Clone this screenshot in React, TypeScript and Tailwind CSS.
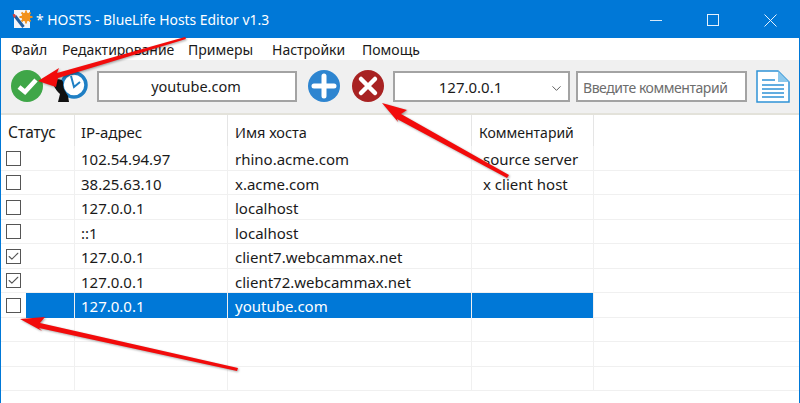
import React from 'react';
import { ChevronDown, Check } from 'lucide-react';

const menuItems = [
  { name: 'Файл', width: 'w-[51px]' },
  { name: 'Редактирование', width: 'w-[126px]' },
  { name: 'Примеры', width: 'w-[84px]' },
  { name: 'Настройки', width: 'w-[90px]' },
  { name: 'Помощь', width: 'w-[70px]' },
];

const headers = [
  { title: 'Статус', className: 'pl-[7px] text-[15.5px]' },
  { title: 'IP-адрес', className: 'pl-[6px] text-[15px]' },
  { title: 'Имя хоста', className: 'pl-[7px] text-[14.5px]' },
  { title: 'Комментарий', className: 'pl-[7px] text-[14px]' },
  { title: '', className: '' },
];

const rows = [
  { checked: false, ip: '102.54.94.97', host: 'rhino.acme.com', comment: 'source server' },
  { checked: false, ip: '38.25.63.10', host: 'x.acme.com', comment: 'x client host' },
  { checked: false, ip: '127.0.0.1', host: 'localhost', comment: '' },
  { checked: false, ip: '::1', host: 'localhost', comment: '' },
  { checked: true, ip: '127.0.0.1', host: 'client7.webcammax.net', comment: '' },
  { checked: true, ip: '127.0.0.1', host: 'client72.webcammax.net', comment: '' },
  { checked: false, ip: '127.0.0.1', host: 'youtube.com', comment: '', selected: true },
  { checked: false, ip: '', host: '', comment: '' },
  { checked: false, ip: '', host: '', comment: '' },
  { checked: false, ip: '', host: '', comment: '' },
];

function AppIcon() {
  return (
    <svg width="22" height="22" viewBox="0 0 22 22" className="shrink-0">
      <rect x="3" y="1" width="16" height="18" fill="#f4f6fa" />
      <circle cx="15" cy="8" r="4.5" fill="#f2921d" />
      <circle cx="15" cy="8" r="1.5" fill="#fbe3bd" />
      <path d="M15 1.5v13M8.5 8h13M10.5 3.5l9 9M19.5 3.5l-9 9" stroke="#f2921d" strokeWidth="1.8" />
      <path d="M4 7l8.5 11" stroke="#245f9e" strokeWidth="3" />
      <path d="M1.5 5.5L4 5l1 2.5L3 9z" fill="#d8403a" />
    </svg>
  );
}

function ClockIcon() {
  return (
    <svg width="34" height="34" viewBox="0 0 34 34">
      <circle cx="20" cy="16" r="12" fill="#fff" stroke="#1f7fc4" strokeWidth="3.5" />
      <path d="M17 7l3 11 6-5" fill="none" stroke="#1f7fc4" strokeWidth="2" />
      <path d="M0 12C4 9 10 10 9 15 9 20 12 23 14 27L15 33H4L6 25C2 21-2 16 0 12z" fill="#111" />
    </svg>
  );
}

function CircleButton({ color, children }: { color: string; children: React.ReactNode }) {
  return (
    <svg width="32" height="32" viewBox="0 0 32 32" className="shrink-0">
      <circle cx="16" cy="16" r="16" fill={color} />
      {children}
    </svg>
  );
}

function DocIcon() {
  return (
    <svg width="34" height="33" viewBox="0 0 34 33">
      <path d="M1 1h21l11 11v20H1z" fill="#fff" stroke="#2f93d6" strokeWidth="1.5" />
      <path d="M22 1l11 11H22z" fill="#8cc8ec" />
      <path d="M6 10h13M6 15h22M6 19h22M6 23h22M6 27h22" stroke="#2f93d6" strokeWidth="1.5" />
    </svg>
  );
}

function Checkbox({ checked }: { checked: boolean }) {
  return (
    <div className="flex h-[15px] w-[15px] items-center justify-center border border-[#555] bg-white">
      {checked && <Check size={13} strokeWidth={2} className="text-[#555]" />}
    </div>
  );
}

function Arrows() {
  return (
    <svg
      width="800"
      height="403"
      viewBox="0 0 800 403"
      className="pointer-events-none absolute -left-px top-0 drop-shadow-[1px_1px_1px_rgba(0,0,0,0.35)]"
    >
      <path d="M38 81L59 68 57 73 185 37 186 39 58 78 56 87z" fill="#f20b0b" />
      <path d="M382 103L407 110 401 114 509 175 507 178 397 119 398 122z" fill="#f20b0b" />
      <path d="M20 319L45 317 40 323 238 368 237 371 39 328 42 331z" fill="#f20b0b" />
    </svg>
  );
}

export default function App() {
  return (
    <div className="relative flex h-[403px] w-[800px] flex-col overflow-hidden border-x border-[#0078d7] bg-white font-['Noto_Sans',sans-serif] text-[14px] text-[#1a1a1a]">
      {/* title bar */}
      <div className="flex h-[38px] shrink-0 items-center bg-[#0078d7] pl-[10px] pt-[2px] text-white">
        <AppIcon />
        <span className="ml-[3px] text-[13.9px]">* HOSTS - BlueLife Hosts Editor v1.3</span>
        <div className="ml-auto mr-[22px] flex items-center gap-[45px]">
          <svg width="12" height="13" viewBox="0 0 12 13">
            <path d="M0 6.5h12" stroke="#d5e8f8" strokeWidth="1" />
          </svg>
          <svg width="12" height="12" viewBox="0 0 12 12">
            <rect x="0.5" y="0.5" width="11" height="11" fill="none" stroke="#e6f1fb" strokeWidth="1" />
          </svg>
          <svg width="13" height="13" viewBox="0 0 13 13">
            <path d="M0.5 0.5l12 12M12.5 0.5l-12 12" stroke="#e6f1fb" strokeWidth="1" />
          </svg>
        </div>
      </div>

      {/* menu */}
      <div className="flex h-[22px] shrink-0 items-center pl-[10px]">
        {menuItems.map((item) => (
          <span key={item.name} className={item.width}>
            {item.name}
          </span>
        ))}
      </div>

      {/* toolbar */}
      <div className="flex h-[55px] shrink-0 items-center border-b-2 border-[#e3e2da] bg-[#f0f0f0] pb-[1px] pl-[10px]">
        <CircleButton color="#3fa648">
          <path d="M8 17l6 5 11-12" fill="none" stroke="#fff" strokeWidth="4.5" />
        </CircleButton>
        <div className="ml-[11px]">
          <ClockIcon />
        </div>
        <div className="ml-[9px] flex h-[31px] w-[200px] items-center justify-center border-2 border-[#a3a3a3] bg-white pr-[2px] pt-[2px] text-[14.5px]">
          youtube.com
        </div>
        <div className="ml-[11px]">
          <CircleButton color="#2e85d0">
            <path d="M16 6v20M6 16h20" stroke="#fff" strokeWidth="5" strokeLinecap="round" />
          </CircleButton>
        </div>
        <div className="ml-[12px]">
          <CircleButton color="#a82222">
            <path d="M9 9l14 14M23 9L9 23" stroke="#fff" strokeWidth="4.5" strokeLinecap="round" />
          </CircleButton>
        </div>
        <div className="relative ml-[9px] flex h-[31px] w-[177px] items-center justify-center border-2 border-[#a3a3a3] bg-white pr-[22px] pt-[2px] text-[15px]">
          127.0.0.1
          <ChevronDown size={15} strokeWidth={1.5} className="absolute right-[4px] top-[8px] text-[#555]" />
        </div>
        <div className="ml-[6px] flex h-[31px] w-[171px] items-center border-2 border-[#a3a3a3] bg-white pl-[5px] pt-[2px] tracking-[-0.45px] text-[#6d6d6d]">
          Введите комментарий
        </div>
        <div className="ml-[9px]">
          <DocIcon />
        </div>
      </div>

      {/* table header */}
      <div className="grid h-[31px] shrink-0 grid-cols-[74px_153px_244px_122px_1fr]">
        {headers.map((col, i) => (
          <div
            key={i}
            className={`flex items-center pt-[4px] ${col.className} ${i < 4 ? 'border-r border-[#e5e5e5]' : ''}`}
          >
            {col.title}
          </div>
        ))}
      </div>

      {/* rows */}
      {rows.map((row, i) => (
        <div
          key={i}
          className="grid h-[24.5px] shrink-0 grid-cols-[74px_153px_244px_122px_1fr] border-b border-[#f0f0f0] text-[15px]"
        >
          <div className="relative flex items-center border-r border-[#f0f0f0] pl-[5px]">
            {row.selected && <div className="absolute inset-y-0 left-[25px] right-0 bg-[#0078d7]" />}
            {i < 7 && <Checkbox checked={row.checked} />}
          </div>
          <div className={`flex items-center border-r border-[#f0f0f0] pl-[6px] pt-[2px] ${row.selected ? 'bg-[#0078d7] text-white' : ''}`}>
            {row.ip}
          </div>
          <div className={`flex items-center border-r border-[#f0f0f0] pl-[7px] pt-[2px] ${row.selected ? 'bg-[#0078d7] text-white' : ''}`}>
            {row.host}
          </div>
          <div className={`flex items-center border-r border-[#f0f0f0] pl-[11px] pt-[2px] ${row.selected ? 'bg-[#0078d7]' : ''}`}>
            {row.comment}
          </div>
          <div />
        </div>
      ))}

      <Arrows />
    </div>
  );
}
